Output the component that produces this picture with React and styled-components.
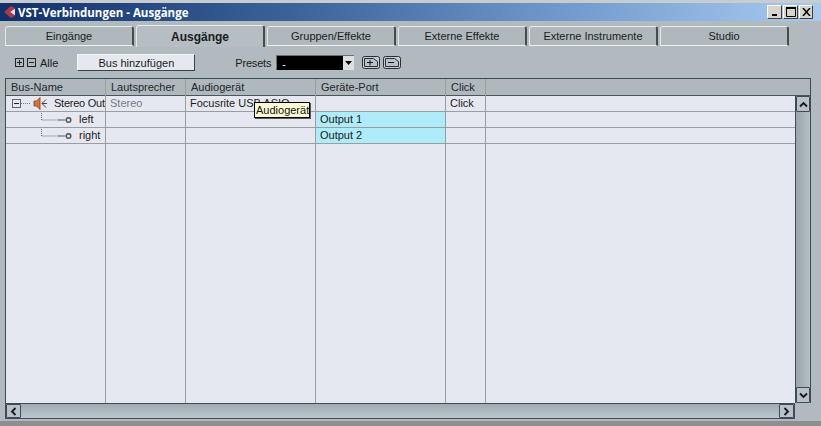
import React from "react";
import styled, { createGlobalStyle } from "styled-components";

const Global = createGlobalStyle`
  html, body { margin: 0; padding: 0; background: #b0babf; }
  #root { width: 821px; height: 426px; overflow: hidden; }
  * { box-sizing: border-box; }
  svg { flex: none; }
`;

const Window = styled.div`
  width: 821px; height: 426px; display: flex; flex-direction: column;
  background: #b0babf; font: 11px "Liberation Sans", Arial, sans-serif; color: #1a1c20;
  border-top: 3px solid #c6ccd0; border-bottom: 5px solid #8d8f8f; overflow: hidden;
`;
const TitleBar = styled.div`
  height: 18px; flex: none; display: flex; align-items: center; padding: 0 8px 0 3px; gap: 2px;
  background: linear-gradient(90deg, #12306a 0%, #3a6299 35%, #7098cc 68%, #a8ccf0 100%);
`;
const Title = styled.div`
  flex: 1; color: #fff; font: 700 11.5px "Open Sans", sans-serif; white-space: nowrap;
`;
const WinButtons = styled.div`display: flex; gap: 1px;`;
const WinButton = styled.div`
  width: ${p => p.$w || 15}px; height: 14px; display: flex; align-items: center; justify-content: center;
  background: #d8d4c8; border: 1px solid; border-color: #fff #404040 #404040 #fff;
`;
const Tabs = styled.div`
  display: flex; gap: 2px; padding: 5px 0 0 5px; height: 26px; flex: none;
`;
const Tab = styled.div`
  width: 129px; height: ${p => p.$active ? "22px" : "20px"}; display: flex; align-items: center; justify-content: center;
  margin-top: ${p => p.$active ? "-1px" : "0"}; position: relative; z-index: ${p => p.$active ? 1 : 0};
  background: ${p => p.$active ? "#b4bec3" : "#aeb8bd"};
  border-top: 1px solid #e8ecee; border-left: 1px solid #e4e8ea; border-right: 2px solid #444c50;
  border-bottom: ${p => p.$active ? "none" : "1px solid #eef1f2"}; border-radius: 3px 3px 0 0;
  font-weight: ${p => p.$active ? "700" : "400"}; font-size: ${p => p.$active ? "12px" : "11px"};
`;
const Toolbar = styled.div`
  height: 31px; flex: none; display: flex; align-items: center; padding-left: 15px;
`;
const PlusMinus = styled.span`display: flex; gap: 3px; margin-right: 4px;`;
const AddButton = styled.div`
  width: 118px; height: 17px; margin-left: 19px; display: flex; align-items: center; justify-content: center;
  background: #e6e8f0; border: 1px solid; border-color: #f6f7fa #3c4246 #3c4246 #f6f7fa;
`;
const PresetLabel = styled.span`margin-left: 40px; letter-spacing: -0.2px;`;
const Select = styled.div`
  width: 78px; height: 15px; margin-left: 5px; background: #000; color: #fff; display: flex;
  justify-content: space-between; padding-left: 5px; line-height: 17px;
  border: 1px solid #6a7074; border-width: 1px 0 0 1px;
`;
const SelectArrow = styled.div`
  width: 11px; height: 100%; background: #dcdfe4; display: flex; align-items: center; justify-content: center;
`;
const IconBtns = styled.div`display: flex; gap: 3px; margin-left: 8px;`;
const Frame = styled.div`
  flex: 1; margin: 0 10px 2px 5px; display: grid; grid-template-columns: 1fr 16px; grid-template-rows: 1fr 16px;
  min-height: 0; background: #b0babf;
`;
const Table = styled.div`
  display: flex; min-height: 0; background: #e6e8f1;
  border-top: 1px solid #3f4a52; border-left: 1px solid #3f4a52;
`;
const Column = styled.div`
  width: ${p => p.$w ? `${p.$w}px` : "auto"}; flex: ${p => p.$w ? "none" : "1"};
  display: flex; flex-direction: column; border-right: ${p => p.$last ? "none" : "1px solid #9a9e9f"};
`;
const Head = styled.div`
  height: 17px; flex: none; background: #aeb8bd; border-bottom: 1px solid #4b555c; padding-left: 5px; line-height: 17px; color: #23272b;
  white-space: nowrap; overflow: hidden;
`;
const Cell = styled.div`
  height: 16px; flex: none; border-bottom: 1px solid #9a9e9f; background: ${p => p.$port ? "#aeecf9" : "transparent"};
  padding-left: ${p => p.$pad ?? 4}px; line-height: 15px; white-space: nowrap; color: ${p => p.$dim ? "#777b80" : "#1a1c20"};
  display: flex; align-items: center; overflow: hidden;
`;
const TreeText = styled.span`
  margin-left: ${p => p.$ml}px; flex: none; letter-spacing: ${p => p.$tight ? "-0.25px" : "0"};
`;
const VScroll = styled.div`
  display: flex; flex-direction: column; background: linear-gradient(90deg, #9aa6ac, #b4bec3);
  border: 1px solid #3f4a52; border-width: 1px 1px 0 1px;
`;
const HeadCap = styled.div`height: 17px; flex: none; background: #aeb8bd; border-bottom: 1px solid #4b555c; margin-left: -1px;`;
const Track = styled.div`flex: 1;`;
const ArrowBtn = styled.div`
  width: ${p => p.$w}px; height: ${p => p.$h}px; flex: none; display: flex; align-items: center; justify-content: center;
  background: #b8c2c8; border: 1px solid #3f4a52; border-radius: 1px;
`;
const HScroll = styled.div`
  display: flex; justify-content: space-between; background: linear-gradient(180deg, #a0acb2, #bcc6ca);
  border: 1px solid #3f4a52;
`;
const Corner = styled.div`background: #b0babf;`;
const Tooltip = styled.div`
  position: absolute; left: 254px; top: 102px; width: 56px; height: 16px; background: #fdfbd4;
  border: 1px solid #000; box-shadow: 1px 1px 0 #555; line-height: 14px; padding-left: 1px; z-index: 5; color: #111; white-space: nowrap;
`;

const BoxIcon = ({ plus }) => (
  <svg width="9" height="9" viewBox="0 0 9 9">
    <rect x=".5" y=".5" width="8" height="8" fill="none" stroke="#22262a" />
    <path d={plus ? "M2 4.5h5M4.5 2v5" : "M2 4.5h5"} stroke="#22262a" />
  </svg>
);
const Arrow = ({ d }) => (
  <svg width="9" height="7" viewBox="0 0 9 7"><path d={d} fill="none" stroke="#15181c" strokeWidth="1.8" /></svg>
);
const TreeRoot = () => (
  <svg width="38" height="15" viewBox="0 0 38 15">
    <rect x=".5" y="3.5" width="8" height="8" fill="#e6e8f1" stroke="#666" />
    <path d="M2 7.5h5" stroke="#222" />
    <path d="M9 7.5h9" stroke="#777" strokeDasharray="1 1" />
    <path d="M22 5h2.5l3.5-3.5v12L24.5 10H22z" fill="#d8743a" stroke="#8a3a18" strokeWidth=".8" />
    <path d="M34 3.5l-4 4 4 4M30 7.5h5" fill="none" stroke="#333" strokeWidth=".9" />
  </svg>
);
const TreeLeaf = () => (
  <svg width="60" height="15" viewBox="0 0 60 15">
    <path d="M35.5 -1v9h17" fill="none" stroke="#666" strokeDasharray="1 1" />
    <path d="M52 8h8" stroke="#555" strokeWidth="1" />
  </svg>
);
const Port = () => (
  <svg width="7" height="15" viewBox="0 0 7 15"><circle cx="2.5" cy="8" r="2.3" fill="#e6e8f1" stroke="#555" strokeWidth="1.5" /></svg>
);
const PageIcon = ({ plus }) => (
  <svg width="18" height="13" viewBox="0 0 18 13">
    <rect x=".5" y=".5" width="17" height="12" rx="2" fill="#c4ccd2" stroke="#2a3034" />
    <path d="M2.5 2.5h9l4 3v5h-13z" fill="#b8c2c8" stroke="#2a3034" />
    <path d={plus ? "M5 6.5h6M8 4v5.5" : "M5 6.5h6"} stroke="#15181c" />
  </svg>
);

const tabs = ["Eingänge", "Ausgänge", "Gruppen/Effekte", "Externe Effekte", "Externe Instrumente", "Studio"];

export default function App() {
  return (
    <Window>
      <Global />
      <TitleBar>
        <svg width="13" height="14" viewBox="0 0 13 14">
          <path d="M8 1L1 7l7 6 4-2-5-4 5-4z" fill="#b5373a" />
          <path d="M7 7l5-3.5v7z" fill="#dfe2ea" />
        </svg>
        <Title>VST-Verbindungen - Ausgänge</Title>
        <WinButtons>
          <WinButton><svg width="8" height="8"><path d="M1 7h5" stroke="#000" strokeWidth="2" /></svg></WinButton>
          <WinButton><svg width="10" height="10"><path d="M.5 1.5h9v8h-9z" fill="none" stroke="#000" /><path d="M0 1h10" stroke="#000" strokeWidth="2" /></svg></WinButton>
          <WinButton $w={14}><svg width="9" height="8"><path d="M1 0l7 8M8 0L1 8" stroke="#000" strokeWidth="1.5" /></svg></WinButton>
        </WinButtons>
      </TitleBar>
      <Tabs>
        {tabs.map((t, i) => <Tab key={t} $active={i === 1}>{t}</Tab>)}
      </Tabs>
      <Toolbar>
        <PlusMinus><BoxIcon plus /><BoxIcon /></PlusMinus>
        Alle
        <AddButton>Bus hinzufügen</AddButton>
        <PresetLabel>Presets</PresetLabel>
        <Select>-
          <SelectArrow><svg width="7" height="4"><path d="M0 0h7L3.5 4z" fill="#000" /></svg></SelectArrow>
        </Select>
        <IconBtns>
          <PageIcon plus />
          <PageIcon />
        </IconBtns>
      </Toolbar>
      <Frame>
        <Table>
          <Column $w={100}>
            <Head>Bus-Name</Head>
            <Cell $pad={6}><TreeRoot /><TreeText $ml={4} $tight>Stereo Out</TreeText></Cell>
            <Cell $pad={0}><TreeLeaf /><Port /><TreeText $ml={6}>left</TreeText></Cell>
            <Cell $pad={0}><TreeLeaf /><Port /><TreeText $ml={6}>right</TreeText></Cell>
          </Column>
          <Column $w={80}>
            <Head>Lautsprecher</Head>
            <Cell $dim>Stereo</Cell>
            <Cell /><Cell />
          </Column>
          <Column $w={130}>
            <Head>Audiogerät</Head>
            <Cell>Focusrite USB ASIO</Cell>
            <Cell /><Cell />
          </Column>
          <Column $w={130}>
            <Head>Geräte-Port</Head>
            <Cell />
            <Cell $port>Output 1</Cell>
            <Cell $port>Output 2</Cell>
          </Column>
          <Column $w={40}>
            <Head>Click</Head>
            <Cell>Click</Cell>
            <Cell /><Cell />
          </Column>
          <Column $last>
            <Head />
            <Cell /><Cell /><Cell />
          </Column>
        </Table>
        <VScroll>
          <HeadCap />
          <ArrowBtn $w={14} $h={16}><Arrow d="M1 5.5L4.5 2 8 5.5" /></ArrowBtn>
          <Track />
          <ArrowBtn $w={14} $h={16}><Arrow d="M1 1.5L4.5 5 8 1.5" /></ArrowBtn>
        </VScroll>
        <HScroll>
          <ArrowBtn $w={15} $h={14}><svg width="7" height="9" viewBox="0 0 7 9"><path d="M5.5 1L2 4.5 5.5 8" fill="none" stroke="#15181c" strokeWidth="1.8" /></svg></ArrowBtn>
          <ArrowBtn $w={15} $h={14}><svg width="7" height="9" viewBox="0 0 7 9"><path d="M1.5 1L5 4.5 1.5 8" fill="none" stroke="#15181c" strokeWidth="1.8" /></svg></ArrowBtn>
        </HScroll>
        <Corner />
      </Frame>
      <Tooltip>Audiogerät</Tooltip>
    </Window>
  );
}
